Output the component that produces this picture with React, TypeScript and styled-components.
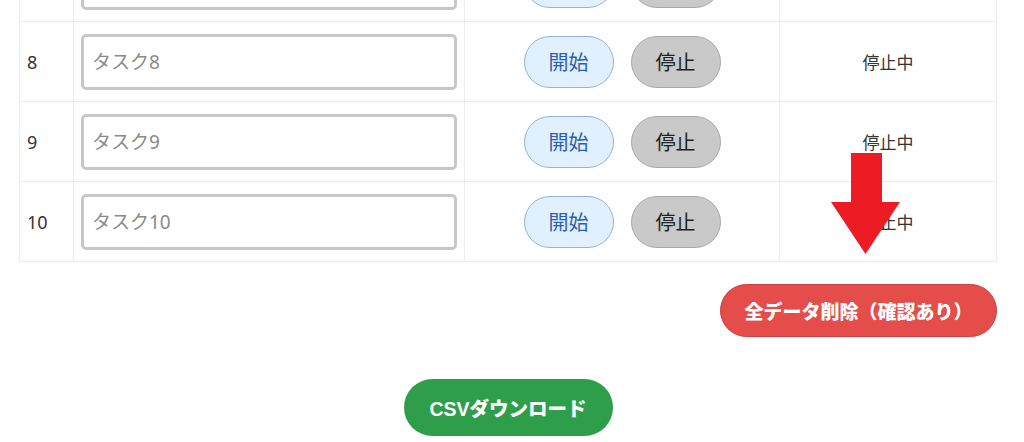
import styled, { createGlobalStyle } from 'styled-components';

const GlobalStyle = createGlobalStyle`
	html, body {
		margin: 0;
		padding: 0;
		background: #ffffff;
		overflow: hidden;
	}
	body {
		font-family: 'Noto Sans', 'Noto Sans CJK JP', sans-serif;
		color: #333333;
	}
`;

const Page = styled.div`
	position: relative;
	padding: 0 27px 0 19px;
	height: 442px;
	overflow: hidden;
`;

const Table = styled.div`
	margin-top: -58px;
	border-left: 1px solid #ececec;
	border-right: 1px solid #ececec;
`;

const Row = styled.div`
	box-sizing: border-box;
	display: grid;
	grid-template-columns: 53px 391px 315px 1fr;
	height: 80px;
	border-bottom: 1px solid #ececec;
`;

const Cell = styled.div<{ $center?: boolean }>`
	display: flex;
	align-items: center;
	justify-content: ${(props) => (props.$center ? 'center' : 'flex-start')};
	border-left: 1px solid #ececec;
	&:first-child {
		border-left: none;
	}
`;

const NumCell = styled(Cell)`
	padding-left: 7px;
	font-size: 18px;
	color: #333333;
`;

const InputCell = styled(Cell)`
	padding: 0 7px;
`;

const TaskInput = styled.input`
	box-sizing: border-box;
	width: 100%;
	height: 56px;
	border: 3px solid #c7c7c7;
	border-radius: 5px;
	padding: 0 8px;
	font-family: 'Noto Sans', 'Noto Sans CJK JP', sans-serif;
	font-size: 19px;
	color: #333333;
	outline: none;
	&::placeholder {
		color: #8a8a8a;
	}
`;

const ButtonGroup = styled(Cell)`
	gap: 17px;
`;

const PillButton = styled.button<{ $variant: 'start' | 'stop' }>`
	box-sizing: border-box;
	width: 90px;
	height: 52px;
	border-radius: 26px;
	padding: 0;
	font-family: 'Noto Sans', 'Noto Sans CJK JP', sans-serif;
	font-size: 20px;
	cursor: pointer;
	background: ${(props) => (props.$variant === 'start' ? '#e1f0fe' : '#c9c9c9')};
	border: 1px solid ${(props) => (props.$variant === 'start' ? '#8fb5dc' : '#a9a9a9')};
	color: ${(props) => (props.$variant === 'start' ? '#2e5eae' : '#222222')};
`;

const Status = styled(Cell)`
	font-size: 17px;
	color: #333333;
`;

const Actions = styled.div`
	display: flex;
	flex-direction: column;
	align-items: center;
`;

const DangerRow = styled.div`
	align-self: stretch;
	display: flex;
	justify-content: flex-end;
	margin-top: 22px;
`;

const DangerButton = styled.button`
	box-sizing: border-box;
	width: 277px;
	height: 53px;
	border-radius: 27px;
	padding: 0;
	background: #e54d4b;
	border: 1px solid #c94040;
	color: #ffffff;
	font-family: 'Liberation Sans', 'Noto Sans CJK JP', sans-serif;
	font-weight: 900;
	font-size: 19px;
	cursor: pointer;
`;

const CsvButton = styled.button`
	box-sizing: border-box;
	margin-top: 42px;
	width: 209px;
	height: 57px;
	border-radius: 29px;
	padding: 0;
	border: none;
	background: #2f9e4a;
	color: #ffffff;
	font-family: 'Liberation Sans', 'Noto Sans CJK JP', sans-serif;
	font-weight: 900;
	font-size: 19.5px;
	cursor: pointer;
`;

const Arrow = styled.svg`
	position: absolute;
	left: 831px;
	top: 153px;
	width: 69px;
	height: 101px;
	pointer-events: none;
`;

const tasks = [7, 8, 9, 10];

const App = () => {
	return (
		<>
			<GlobalStyle />
			<Page>
				<Table>
					{tasks.map((n) => (
						<Row key={n}>
							<NumCell>{n}</NumCell>
							<InputCell>
								<TaskInput placeholder={`タスク${n}`} />
							</InputCell>
							<ButtonGroup $center>
								<PillButton $variant="start">開始</PillButton>
								<PillButton $variant="stop">停止</PillButton>
							</ButtonGroup>
							<Status $center>停止中</Status>
						</Row>
					))}
				</Table>
				<Actions>
					<DangerRow>
						<DangerButton>全データ削除（確認あり）</DangerButton>
					</DangerRow>
					<CsvButton>CSVダウンロード</CsvButton>
				</Actions>
				<Arrow viewBox="0 0 69 101">
					<polygon
						points="20,0 51,0 51,49 69,49 34.5,101 0,49 20,49"
						fill="#ed1c24"
					/>
				</Arrow>
			</Page>
		</>
	);
};

export default App;
